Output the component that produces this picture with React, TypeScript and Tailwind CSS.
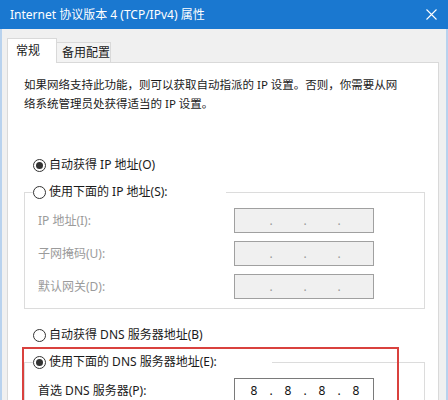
import React from "react";

const Radio = ({ checked }: { checked?: boolean }) => (
  <span className="w-[13px] h-[13px] rounded-full border border-[#333333] bg-white flex items-center justify-center shrink-0">
    {checked && <span className="w-[7px] h-[7px] rounded-full bg-[#333333]" />}
  </span>
);

const RadioRow = ({ checked, label }: { checked?: boolean; label: string }) => (
  <div className="flex items-center h-[16px] gap-[3px] text-[12px] text-[#1a1a1a] whitespace-nowrap">
    <Radio checked={checked} />
    <span>{label}</span>
  </div>
);

const IpBox = ({ parts, disabled }: { parts?: string[]; disabled?: boolean }) => {
  const cells = parts ?? ["", "", "", ""];
  return (
    <div
      className={
        "w-[140px] h-[25px] border flex items-center pl-[5px] text-[12px] " +
        (disabled ? "bg-[#f0f0f0] border-[#a0a0a0] text-[#9a9a9a]" : "bg-white border-[#7a7a7a] text-[#111111]")
      }
    >
      {cells.map((p, i) => (
        <React.Fragment key={i}>
          <span className="w-[28px] text-center">{p}</span>
          {i < 3 && <span className="w-[6px] text-center">.</span>}
        </React.Fragment>
      ))}
    </div>
  );
};

const Row = ({ label, children, disabled }: { label: string; children: React.ReactNode; disabled?: boolean }) => (
  <div className="grid grid-cols-[196px_140px] items-center">
    <span className={"text-[12px] " + (disabled ? "text-[#9b9b9b]" : "text-[#1a1a1a]")}>{label}</span>
    {children}
  </div>
);

export default function App() {
  return (
    <div className="relative w-[448px] h-[400px] overflow-hidden bg-[#f0f0f0] font-['Noto_Sans','Noto_Sans_CJK_SC',sans-serif]">
      {/* title bar */}
      <div className="h-[29px] bg-[#1a78d0] flex items-center justify-between pl-[10px] pr-[11px] text-white text-[12px]">
        <span>Internet 协议版本 4 (TCP/IPv4) 属性</span>
        <svg width="11" height="11" viewBox="0 0 11 11" fill="none" stroke="white" strokeWidth="1.1">
          <path d="M0.5 0.5 L10.5 10.5 M10.5 0.5 L0.5 10.5" />
        </svg>
      </div>

      <div className="h-[371px] border-x-2 border-[#b8d2ee]">
        {/* tabs */}
        <div className="flex items-end pl-[5px] pt-[9px]">
          <div className="relative z-10 -mb-[1px] h-[25px] w-[50px] bg-white border border-b-0 border-[#d9d9d9] pl-[8px] pt-[3px] text-[12px] text-[#1a1a1a]">
            常规
          </div>
          <div className="h-[20px] w-[54px] bg-[#f3f3f3] border border-b-0 border-l-0 border-[#d9d9d9] pl-[5px] pt-[1px] text-[12px] text-[#1a1a1a]">
            备用配置
          </div>
        </div>

        {/* panel */}
        <div className="ml-[5px] w-[432px] h-[400px] bg-white border border-[#d9d9d9] pl-[16px] pt-[12px]">
          <p className="text-[11.5px] leading-[19px] text-[#1a1a1a]">
            如果网络支持此功能，则可以获取自动指派的 IP 设置。否则，你需要从网
            <br />
            络系统管理员处获得适当的 IP 设置。
          </p>

          <div className="mt-[44px] ml-[9px]">
            <RadioRow checked label="自动获得 IP 地址(O)" />
          </div>

          <fieldset className="mt-[11px] w-[401px] border border-[#dcdcdc] p-0 pb-[9px]">
            <legend className="ml-[8px] w-[193px] bg-white">
              <RadioRow label="使用下面的 IP 地址(S):" />
            </legend>
            <div className="pl-[13px] pt-[8px] flex flex-col gap-[8px]">
              <Row label="IP 地址(I):" disabled>
                <IpBox disabled />
              </Row>
              <Row label="子网掩码(U):" disabled>
                <IpBox disabled />
              </Row>
              <Row label="默认网关(D):" disabled>
                <IpBox disabled />
              </Row>
            </div>
          </fieldset>

          <div className="mt-[18px] ml-[9px]">
            <RadioRow label="自动获得 DNS 服务器地址(B)" />
          </div>

          <fieldset className="mt-[11px] w-[401px] border border-[#dcdcdc] p-0 pb-[9px]">
            <legend className="ml-[8px] w-[239px] bg-white">
              <RadioRow checked label="使用下面的 DNS 服务器地址(E):" />
            </legend>
            <div className="pl-[13px] pt-[8px] flex flex-col gap-[8px]">
              <Row label="首选 DNS 服务器(P):">
                <IpBox parts={["8", "8", "8", "8"]} />
              </Row>
            </div>
          </fieldset>
        </div>
      </div>

      {/* red highlight annotation */}
      <div className="absolute left-[22px] top-[347px] w-[377px] h-[80px] border-2 border-[#d9413e]" />
    </div>
  );
}
